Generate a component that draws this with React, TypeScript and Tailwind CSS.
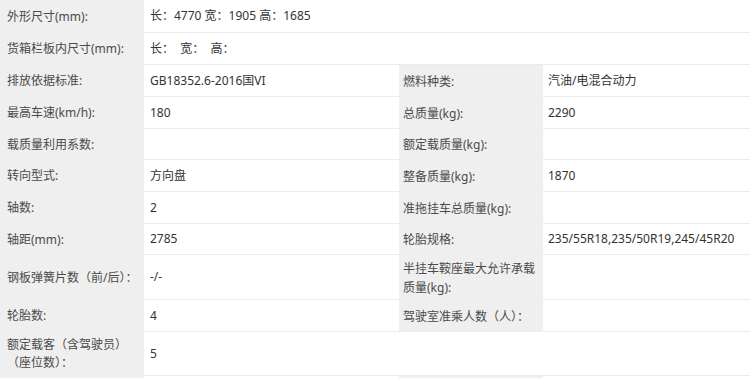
import React from "react";

type R = {
  l: React.ReactNode;
  v?: string;
  rl?: React.ReactNode;
  rv?: string;
  h: string;
  kind: "full" | "pair" | "half";
};

const rows: R[] = [
  { l: "外形尺寸(mm):", v: "长：4770 宽：1905 高：1685", h: "h-[33px]", kind: "full" },
  { l: "货箱栏板内尺寸(mm):", v: "长：  宽：  高：", h: "h-[32px]", kind: "full" },
  { l: "排放依据标准:", v: "GB18352.6-2016国VI", rl: "燃料种类:", rv: "汽油/电混合动力", h: "h-[32px]", kind: "pair" },
  { l: "最高车速(km/h):", v: "180", rl: "总质量(kg):", rv: "2290", h: "h-[32px]", kind: "pair" },
  { l: "载质量利用系数:", v: "", rl: "额定载质量(kg):", rv: "", h: "h-[31px]", kind: "pair" },
  { l: "转向型式:", v: "方向盘", rl: "整备质量(kg):", rv: "1870", h: "h-[32px]", kind: "pair" },
  { l: "轴数:", v: "2", rl: "准拖挂车总质量(kg):", rv: "", h: "h-[32px]", kind: "pair" },
  { l: "轴距(mm):", v: "2785", rl: "轮胎规格:", rv: "235/55R18,235/50R19,245/45R20", h: "h-[31px]", kind: "pair" },
  {
    l: "钢板弹簧片数（前/后）：",
    v: "-/-",
    rl: (
      <>
        半挂车鞍座最大允许承载
        <br />
        质量(kg):
      </>
    ),
    rv: "",
    h: "h-[45px]",
    kind: "pair",
  },
  { l: "轮胎数:", v: "4", rl: "驾驶室准乘人数（人）：", rv: "", h: "h-[32px]", kind: "pair" },
  {
    l: (
      <>
        额定载客（含驾驶员）
        <br />
        （座位数）：
      </>
    ),
    v: "5",
    h: "h-[44px]",
    kind: "half",
  },
  { l: "", v: "", rl: "", rv: "", h: "h-[32px]", kind: "pair" },
];

const font = { fontFamily: '"Noto Sans", "Noto Sans CJK SC", sans-serif' };

export default function App() {
  return (
    <div className="w-[750px] h-[378px] overflow-hidden bg-white text-[12px]" style={font}>
      <div className="grid grid-cols-[144px_255px_144px_207px]">
        {rows.map((r, i) => (
          <React.Fragment key={i}>
            <div className={`${r.h} bg-[#efefef] flex items-center pl-[7px] text-[#4a4a4a] leading-[18px]`}>
              <div>{r.l}</div>
            </div>
            {r.kind === "full" && (
              <div className={`${r.h} col-span-3 flex items-center pl-[6px] text-[#333] border-b border-[#ebebeb]`}>
                <span className="whitespace-pre">{r.v}</span>
              </div>
            )}
            {r.kind === "half" && (
              <>
                <div className={`${r.h} flex items-center pl-[6px] text-[#333] border-b border-[#ebebeb]`}>{r.v}</div>
                <div className={`${r.h} col-span-2 border-b border-[#ebebeb]`} />
              </>
            )}
            {r.kind === "pair" && (
              <>
                <div className={`${r.h} flex items-center pl-[6px] text-[#333] border-b border-[#ebebeb]`}>{r.v}</div>
                <div className={`${r.h} bg-[#efefef] flex items-center pl-1 text-[#4a4a4a] leading-[19px]`}>
                  <div>{r.rl}</div>
                </div>
                <div className={`${r.h} flex items-center pl-[5px] text-[#333] border-b border-[#ebebeb]`}>{r.rv}</div>
              </>
            )}
          </React.Fragment>
        ))}
      </div>
    </div>
  );
}
